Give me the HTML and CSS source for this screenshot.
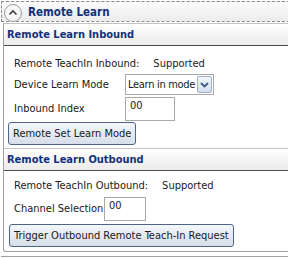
FILE: index.html
```html
<!doctype html>
<html>
<head>
  <title>Remote Learn</title>
  <link rel="stylesheet" href="styles.css">
</head>
<body>
  <div class="accordion">
    <div class="acc-head">
      <span class="acc-toggle">
        <svg width="18" height="18" viewBox="0 0 18 18">
          <circle cx="9" cy="9" r="8.5" fill="#f7f7f7" stroke="#9a9a9a"/>
          <path d="M5.5 10.5L9 7l3.5 3.5" fill="none" stroke="#404040" stroke-width="1.6"/>
        </svg>
      </span>
      <span class="acc-title">Remote Learn</span>
    </div>
    <div class="acc-body">
      <div class="panel">
        <div class="panel-head">Remote Learn Inbound</div>
        <div class="panel-content inbound">
          <div class="row row-info">
            <span class="label-info">Remote TeachIn Inbound:</span>
            <span class="value">Supported</span>
          </div>
          <div class="row row-select">
            <span class="label label-in">Device Learn Mode</span>
            <div class="select">
              <span class="select-text">Learn in mode</span>
              <span class="select-arrow">
                <svg width="9" height="6" viewBox="0 0 9 6"><path d="M1 1l3.5 3.5L8 1" fill="none" stroke="#3d5a8a" stroke-width="1.8"/></svg>
              </span>
            </div>
          </div>
          <div class="row row-input">
            <span class="label label-in">Inbound Index</span>
            <input class="text-input" type="text" value="00">
          </div>
          <div class="row row-button">
            <button class="btn">Remote Set Learn Mode</button>
          </div>
        </div>
      </div>
      <div class="panel panel-last">
        <div class="panel-head">Remote Learn Outbound</div>
        <div class="panel-content outbound">
          <div class="row row-info">
            <span class="label-info">Remote TeachIn Outbound:</span>
            <span class="value">Supported</span>
          </div>
          <div class="row row-input">
            <span class="label label-out">Channel Selection</span>
            <input class="text-input small" type="text" value="00">
          </div>
          <div class="row row-button">
            <button class="btn">Trigger Outbound Remote Teach-In Request</button>
          </div>
        </div>
      </div>
    </div>
  </div>
</body>
</html>
```

FILE: styles.css
```css
body {
  margin: 0;
  background: #fff;
  color: #1a1a1a;
  font: 11px "DejaVu Sans Condensed", "DejaVu Sans", sans-serif;
  overflow: hidden;
}
body * {
  box-sizing: border-box;
}
.accordion {
  width: 300px;
  padding-top: 1px;
  padding-left: 1px;
}
.acc-head {
  display: flex;
  align-items: center;
  height: 21px;
  border: 1px dashed #8a8a8a;
  background: linear-gradient(#fbfbfb, #ececec);
}
.acc-toggle {
  display: flex;
  margin-left: 2px;
  margin-top: 2px;
}
.acc-title {
  margin-left: 6px;
  color: #15307c;
  font-weight: bold;
  font-size: 11.5px;
}
.acc-body {
  padding: 1px 0 0 2px;
  border-bottom: 1px solid #a0a0a0;
  padding-bottom: 4px;
}
.panel {
  border-left: 1px solid #a0a0a0;
}
.panel-last {
  border-bottom: 1px solid #a0a0a0;
  border-bottom-left-radius: 3px;
}
.panel-head {
  display: flex;
  align-items: center;
  height: 23px;
  padding-left: 3px;
  border-top: 1px solid #c4c4c4;
  border-bottom: 1px solid #4d4d4d;
  background: linear-gradient(#ffffff, #ebebeb);
  color: #15307c;
  font-weight: bold;
  font-size: 11px;
}
.panel-content {
  display: flex;
  flex-direction: column;
  padding: 7px 0 3px 10px;
}
.outbound {
  padding-top: 4px;
  padding-bottom: 4px;
}
.row {
  display: flex;
  align-items: center;
}
.row-info {
  height: 20px;
}
.row-select {
  height: 23px;
}
.row-input {
  height: 25px;
}
.outbound .row-input {
  height: 27px;
}
.row-button {
  margin-top: 1px;
  margin-left: -6px;
}
.outbound .row-button {
  margin-left: -5px;
  margin-top: 2px;
}
.value {
  margin-left: 14px;
}
.label-in {
  width: 111px;
}
.label-out {
  width: 90px;
}
.select {
  display: flex;
  align-items: center;
  width: 89px;
  height: 21px;
  padding: 0 1px 0 2px;
  border: 1px solid #a9a9a9;
  background: #fff;
}
.select-text {
  flex: 1;
  white-space: nowrap;
  letter-spacing: -0.3px;
}
.select-arrow {
  display: flex;
  align-items: center;
  justify-content: center;
  flex: none;
  width: 15px;
  height: 17px;
  border: 1px solid #9fb0c8;
  border-radius: 2px;
  background: linear-gradient(#f4f7fb, #d3dded);
}
.text-input {
  width: 50px;
  height: 24px;
  padding: 0 0 6px 4px;
  border: 1px solid #a9a9a9;
  font: inherit;
  color: #1a1a1a;
}
.text-input.small {
  width: 42px;
}
.btn {
  height: 23px;
  padding: 0 4px;
  border: 1px solid #4e6585;
  border-radius: 3px;
  background: linear-gradient(#f5f7fa, #d5deea);
  font: inherit;
  color: #1a1a1a;
  white-space: nowrap;
}
```
